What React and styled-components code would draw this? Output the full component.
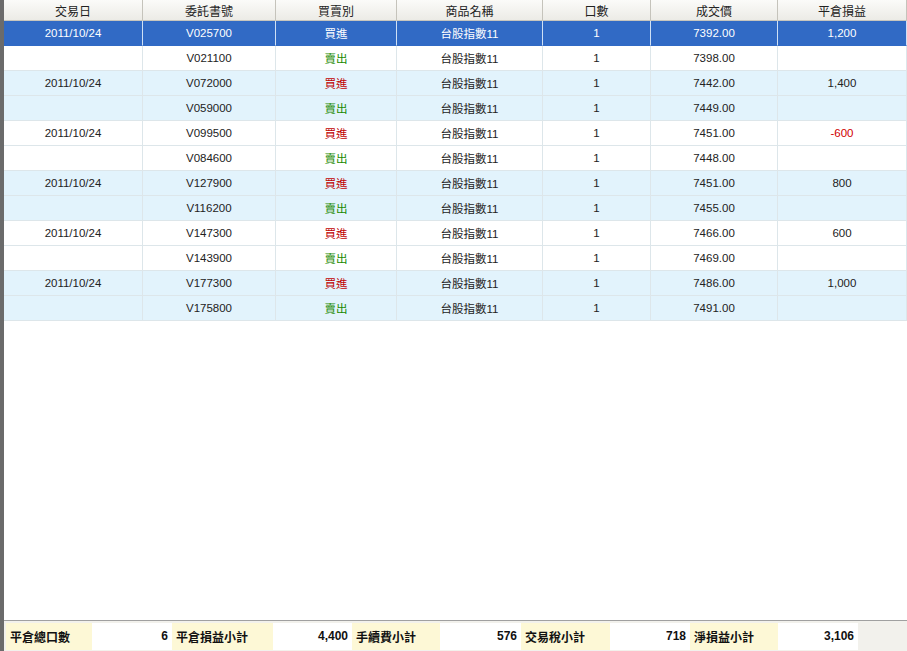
import React from "react";
import styled, { createGlobalStyle } from "styled-components";

const G = createGlobalStyle`
  html,body{margin:0;padding:0;background:#fff;}
  body{font-family:"Liberation Sans","Noto Sans CJK TC",sans-serif;font-size:12px;}
`;
const Page = styled.div`
  width:907px;height:651px;display:flex;flex-direction:column;overflow:hidden;
  border-left:4px solid #6b6b6b;box-sizing:border-box;background:#fff;
`;
const cols = "139px 133px 121px 146px 108px 127px 129px";
const Header = styled.div`
  display:grid;grid-template-columns:${cols};height:21px;
  background:linear-gradient(#fbfbf9,#ecebe6);border-bottom:1px solid #c8c6be;box-sizing:border-box;
`;
const HCell = styled.div`
  display:flex;align-items:center;justify-content:center;color:#222;font-size:12px;
  border-right:1px solid #c5c3bb;
`;
const Body = styled.div`flex:1;`;
const Row = styled.div`
  display:grid;grid-template-columns:${cols};height:25px;
  background:${p=>p.sel?"#316ac5":p.alt?"#e2f3fc":"#fff"};
  color:${p=>p.sel?"#fff":"#222"};
`;
const Cell = styled.div`
  display:flex;align-items:center;justify-content:center;font-size:11.5px;
  border-right:1px solid ${p=>p.sel?"#cfe0f5":"#dde6ea"};
  border-bottom:1px solid ${p=>p.sel?"#316ac5":"#dde6ea"};
  color:${p=>p.sel?"#fff":p.c||"inherit"};
`;
const Footer = styled.div`
  height:30px;border-top:1px solid #a0a0a0;background:#f2f1ec;
  display:flex;align-items:center;padding-left:2px;
`;
const FCell = styled.div`
  width:${p=>p.w}px;height:27px;display:flex;align-items:center;
  justify-content:${p=>p.label?"flex-start":"flex-end"};padding:0 4px;box-sizing:border-box;
  background:${p=>p.label?"#fdf8d6":"#fff"};font-weight:bold;font-size:12px;color:#111;
`;
const data=[
["2011/10/24","V025700","買進","7392.00","1,200"],
["","V021100","賣出","7398.00",""],
["2011/10/24","V072000","買進","7442.00","1,400"],
["","V059000","賣出","7449.00",""],
["2011/10/24","V099500","買進","7451.00","-600"],
["","V084600","賣出","7448.00",""],
["2011/10/24","V127900","買進","7451.00","800"],
["","V116200","賣出","7455.00",""],
["2011/10/24","V147300","買進","7466.00","600"],
["","V143900","賣出","7469.00",""],
["2011/10/24","V177300","買進","7486.00","1,000"],
["","V175800","賣出","7491.00",""],
];
const heads=["交易日","委託書號","買賣別","商品名稱","口數","成交價","平倉損益"];
export default function App(){
  return <><G/><Page>
    <Header>{heads.map(h=><HCell key={h}>{h}</HCell>)}</Header>
    <Body>{data.map((r,i)=>{const sel=i===0;const alt=Math.floor(i/2)%2===1;return(
      <Row key={i} sel={sel} alt={alt}>
        <Cell sel={sel}>{r[0]}</Cell>
        <Cell sel={sel}>{r[1]}</Cell>
        <Cell sel={sel} c={r[2]==="買進"?"#c00000":"#1a8a00"}>{r[2]}</Cell>
        <Cell sel={sel}>台股指數11</Cell>
        <Cell sel={sel}>1</Cell>
        <Cell sel={sel}>{r[3]}</Cell>
        <Cell sel={sel} c={r[4].startsWith("-")?"#d00000":undefined}>{r[4]}</Cell>
      </Row>)})}</Body>
    <Footer>
      <FCell label w={86}>平倉總口數</FCell><FCell w={80}>6</FCell>
      <FCell label w={101}>平倉損益小計</FCell><FCell w={79}>4,400</FCell>
      <FCell label w={88}>手續費小計</FCell><FCell w={81}>576</FCell>
      <FCell label w={89}>交易稅小計</FCell><FCell w={80}>718</FCell>
      <FCell label w={88}>淨損益小計</FCell><FCell w={80}>3,106</FCell>
    </Footer>
  </Page></>;
}
